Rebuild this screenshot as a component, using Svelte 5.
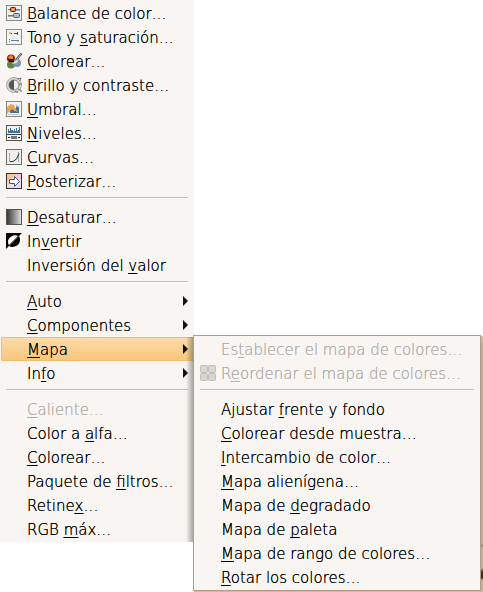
<script>
  const main = [
    { label: 'Balance de color…', key: 0, icon: 'balance' },
    { label: 'Tono y saturación…', key: 7, icon: 'hue' },
    { label: 'Colorear…', key: 0, icon: 'colorize' },
    { label: 'Brillo y contraste…', key: 0, icon: 'contrast' },
    { label: 'Umbral…', key: 0, icon: 'threshold' },
    { label: 'Niveles…', key: 0, icon: 'levels' },
    { label: 'Curvas…', key: 0, icon: 'curves' },
    { label: 'Posterizar…', key: 0, icon: 'posterize' },
    null,
    { label: 'Desaturar…', key: 0, icon: 'desaturate' },
    { label: 'Invertir', key: 2, icon: 'invert' },
    { label: 'Inversión del valor', key: 14 },
    null,
    { label: 'Auto', key: 0, sub: true },
    { label: 'Componentes', key: 0, sub: true },
    { label: 'Mapa', key: 0, sub: true, open: true },
    { label: 'Info', key: 2, sub: true },
    null,
    { label: 'Caliente…', key: 0, disabled: true },
    { label: 'Color a alfa…', key: 8 },
    { label: 'Colorear…', key: 0 },
    { label: 'Paquete de filtros…', key: 11 },
    { label: 'Retinex…', key: 6 },
    { label: 'RGB máx…', key: 4 }
  ];
  const mapa = [
    { label: 'Establecer el mapa de colores…', key: 2, disabled: true },
    { label: 'Reordenar el mapa de colores…', key: 1, disabled: true, icon: 'colormap' },
    null,
    { label: 'Ajustar frente y fondo', key: 8 },
    { label: 'Colorear desde muestra…', key: 0 },
    { label: 'Intercambio de color…', key: 0 },
    { label: 'Mapa alienígena…', key: 0 },
    { label: 'Mapa de degradado', key: 8 },
    { label: 'Mapa de paleta', key: 8 },
    { label: 'Mapa de rango de colores…', key: 0 },
    { label: 'Rotar los colores…', key: 0 }
  ];
</script>

{#snippet glyph(name)}
  <svg class="icon" viewBox="0 0 16 16" aria-hidden="true">
    {#if name === 'balance'}
      <rect x=".5" y=".5" width="15" height="15" fill="#efeeeb" stroke="#858a86" />
      <path d="M2 4h12v1H2zM2 10h12v1H2z" fill="#77797a" />
      <rect x="4.5" y="2.5" width="5" height="4" rx="1" fill="#f0813a" stroke="#5c160a" />
      <rect x="6" y="4" width="2" height="1" fill="#ffd27c" />
      <rect x="7.5" y="8.5" width="6" height="4" rx="1" fill="#a9bdd8" stroke="#4f6482" />
      <path d="M2 11.5h5M10 5.5h4" stroke="#aaa" />
    {:else if name === 'hue'}
      <rect x=".5" y=".5" width="15" height="15" fill="#f2f2ef" stroke="#8a908c" />
      <path d="M3 3h2v2H3z" fill="#e8bd4b" /><path d="M5 4h1v1H5z" fill="#333" />
      <path d="M8 4h1v1H8zM11 3h1v3h-1zM9 4h2v1H9z" fill="#34557e" />
      <path d="M3 10h1v1H3zM3 12h1v1H3z" fill="#777" />
      <path d="M5 11.5h8" stroke="#5d7ba6" /><path d="M6 9.5h2M11 12.5h2" stroke="#ccd2da" />
    {:else if name === 'colorize'}
      <circle cx="5" cy="5.5" r="4" fill="#9b160b" /><path d="M2 4l3-2 2 1v3l-3 1z" fill="#e9812b" />
      <circle cx="5" cy="11.5" r="4" fill="#5f8544" /><circle cx="11" cy="10" r="4" fill="#7e95b3" />
      <path d="M3 6h5v3H3z" fill="#381b18" />
      <path d="M15.5.5L10 7" stroke="#333" stroke-width="2" /><path d="M15 1l-4 5" stroke="#ccc" />
      <path d="M11 6l-5 5 5-1 1-3z" fill="#e8dccb" />
    {:else if name === 'contrast'}
      <circle cx="8" cy="8" r="7.5" fill="#d5d5d3" stroke="#aaa" />
      <circle cx="8" cy="8" r="5" fill="#ececea" stroke="#888" /><path d="M8 3a5 5 0 0 0 0 10z" fill="#555" />
      <path d="M11 2l4-1-1 3M13 7h3M12 12l3 1v2M9 14l3 2" fill="none" stroke="#777" />
    {:else if name === 'threshold'}
      <rect x=".5" y=".5" width="15" height="15" fill="#f3f2ef" stroke="#858a86" />
      <path d="M4 12V9l2-2 3 3V7l1 1V3l1 4 1-3 1 3v5z" fill="#436da3" />
      <path d="M1 6l4-3 3 1 1 3 3 4-3-1-2-2-2 1-4 4z" fill="#eda34d" />
      <path d="M2 13.5h12" stroke="#ccc" />
    {:else if name === 'levels'}
      <rect x=".5" y=".5" width="15" height="15" fill="#f1f1ef" stroke="#555753" />
      <path d="M2 8V4h1v2h1V3h1v2h1V5h1v1h1V4h1v2h1V3h1v3h1V5h1V2h1v6z" fill="#456e9e" />
      <path d="M1 9.5h14" stroke="#444" /><path d="M5 11h6v3H5z" fill="#777" /><path d="M2 12h2v1H2zM12 12h2v1h-2z" fill="#222" />
    {:else if name === 'curves'}
      <rect x=".5" y=".5" width="15" height="15" fill="#eeeeeb" stroke="#6e706d" />
      <path d="M3.5 4v9M12.5 3v10" stroke="#aaa" /><path d="M4 12.5h3q4-1 6-8" fill="none" stroke="#333" />
    {:else if name === 'posterize'}
      <rect x="1" y="1" width="14" height="14" fill="#f7d8df" />
      <path d="M1 1h8v4H1z" fill="#fbc58d" /><path d="M9 1h6v5H9z" fill="#f6c4dc" /><path d="M1 5h4v4H1z" fill="#f8c1ae" /><path d="M10 10h5v5h-5z" fill="#eed8f5" />
      <rect x=".5" y=".5" width="15" height="15" fill="none" stroke="#333" />
      <path d="M3.5 6.5h5v-3l5 5-5 5v-3h-5z" fill="#fff" stroke="#365b91" />
    {:else if name === 'desaturate'}
      <defs><linearGradient id="grey"><stop stop-color="#333" /><stop offset="1" stop-color="#e4e4e4" /></linearGradient></defs>
      <rect x=".5" y=".5" width="15" height="15" fill="url(#grey)" stroke="#555753" />
    {:else if name === 'invert'}
      <path d="M0 0h16v16H0z" fill="#fff" /><path d="M0 0h16l-3 3L3 13l-3 3z" fill="#000" />
      <path d="M12 3C8 1 3 4 2 8q0 3 1 4z" fill="#fff" /><path d="M13 3c2 4 1 8-3 10q-4 2-7 0z" fill="#000" />
      <path d="M11 3L3 11" stroke="#fff" />
    {:else}
      <g fill="#d8d5d2" stroke="#c2c0bd">
        <rect x=".5" y=".5" width="7" height="7" rx="1" /><rect x="8.5" y=".5" width="7" height="7" rx="1" />
        <rect x=".5" y="8.5" width="7" height="7" rx="1" /><rect x="8.5" y="8.5" width="7" height="7" rx="1" />
      </g>
    {/if}
  </svg>
{/snippet}

{#snippet items(list)}
  {#each list as item}
    {#if item}
      <button role="menuitem" class="item" class:open={item.open} disabled={item.disabled}
        aria-haspopup={item.sub ? 'menu' : undefined} aria-expanded={item.sub ? !!item.open : undefined}>
        <span class="slot">{#if item.icon}{@render glyph(item.icon)}{/if}</span>
        <span class="label">{item.label.slice(0, item.key)}<u>{item.label[item.key]}</u>{item.label.slice(item.key + 1)}</span>
        {#if item.sub}<svg class="arrow" viewBox="0 0 5 10" aria-hidden="true"><path d="M0 0l5 5-5 5z" /></svg>{/if}
      </button>
    {:else}
      <hr />
    {/if}
  {/each}
{/snippet}

<div class="desk">
  <div class="menu main" role="menu" aria-label="Colores">{@render items(main)}</div>
  <div class="menu sub" role="menu" aria-label="Mapa">{@render items(mapa)}</div>
</div>

<style>
  :global(body) { background: #fff; }
  .desk {
    display: flex; align-items: flex-start;
    font-family: "DejaVu Sans", "DejaVu Sans Light", sans-serif; font-weight: 200; font-size: 15px;
  }
  .menu { box-sizing: border-box; position: relative; padding: 1px 0; background: #f8f5f2; }
  .main { flex: none; width: 194px; }
  /* shade that the submenu casts on its parent */
  .main::after {
    content: ""; position: absolute; right: 0; top: 337px; bottom: 0; width: 8px;
    background: linear-gradient(90deg, rgba(70, 65, 60, 0), rgba(70, 65, 60, .5));
  }
  .sub { flex: 1; margin: 335px 2px 1px -1px; border: 1px solid #b99a82; }
  .sub::after {
    content: ""; position: absolute; left: 100%; top: 0; bottom: -2px; width: 2px; margin-left: 1px;
    background: linear-gradient(#c9c4c0, #b3aeaa 8px, #b3aeaa 208px, #8d8782 209px, #b9b2ac 212px, #b9b2ac 232px, #332e2b 236px, #332e2b 242px, #b9b2ac 244px);
  }
  .sub::before {
    content: ""; position: absolute; left: 0; right: -3px; top: 100%; height: 1px; margin-top: 1px;
    background: #c8bbae;
  }
  .item {
    display: flex; align-items: center; width: 100%; height: 24px; margin: 0; padding: 0 6px;
    border: 0; background: none; font: inherit; color: #000; text-align: left; white-space: nowrap;
    text-shadow: 0 0 0 #000;
  }
  .slot { flex: none; width: 16px; height: 16px; margin-right: 5px; }
  .icon { display: block; width: 16px; height: 16px; }
  .label { flex: 1; padding-top: 1px; }
  u { text-decoration-thickness: 1px; text-underline-offset: 2px; text-decoration-skip-ink: none; }
  .arrow { width: 5px; height: 10px; fill: #111; }
  .open {
    width: calc(100% - 1px); margin-left: 1px; padding-left: 5px;
    background: linear-gradient(#fddcab, #f7c67c); box-shadow: inset 0 0 0 1px #f3bd70; border-radius: 2px;
  }
  .item:disabled { color: #b0adaa; text-shadow: 0 0 0 #b0adaa, 1px 1px 0 #fff; }
  hr { height: 1px; margin: 4px 6px 7px; border: 0; background: #c0bebb; box-shadow: 0 1px 0 #fff; }
</style>
